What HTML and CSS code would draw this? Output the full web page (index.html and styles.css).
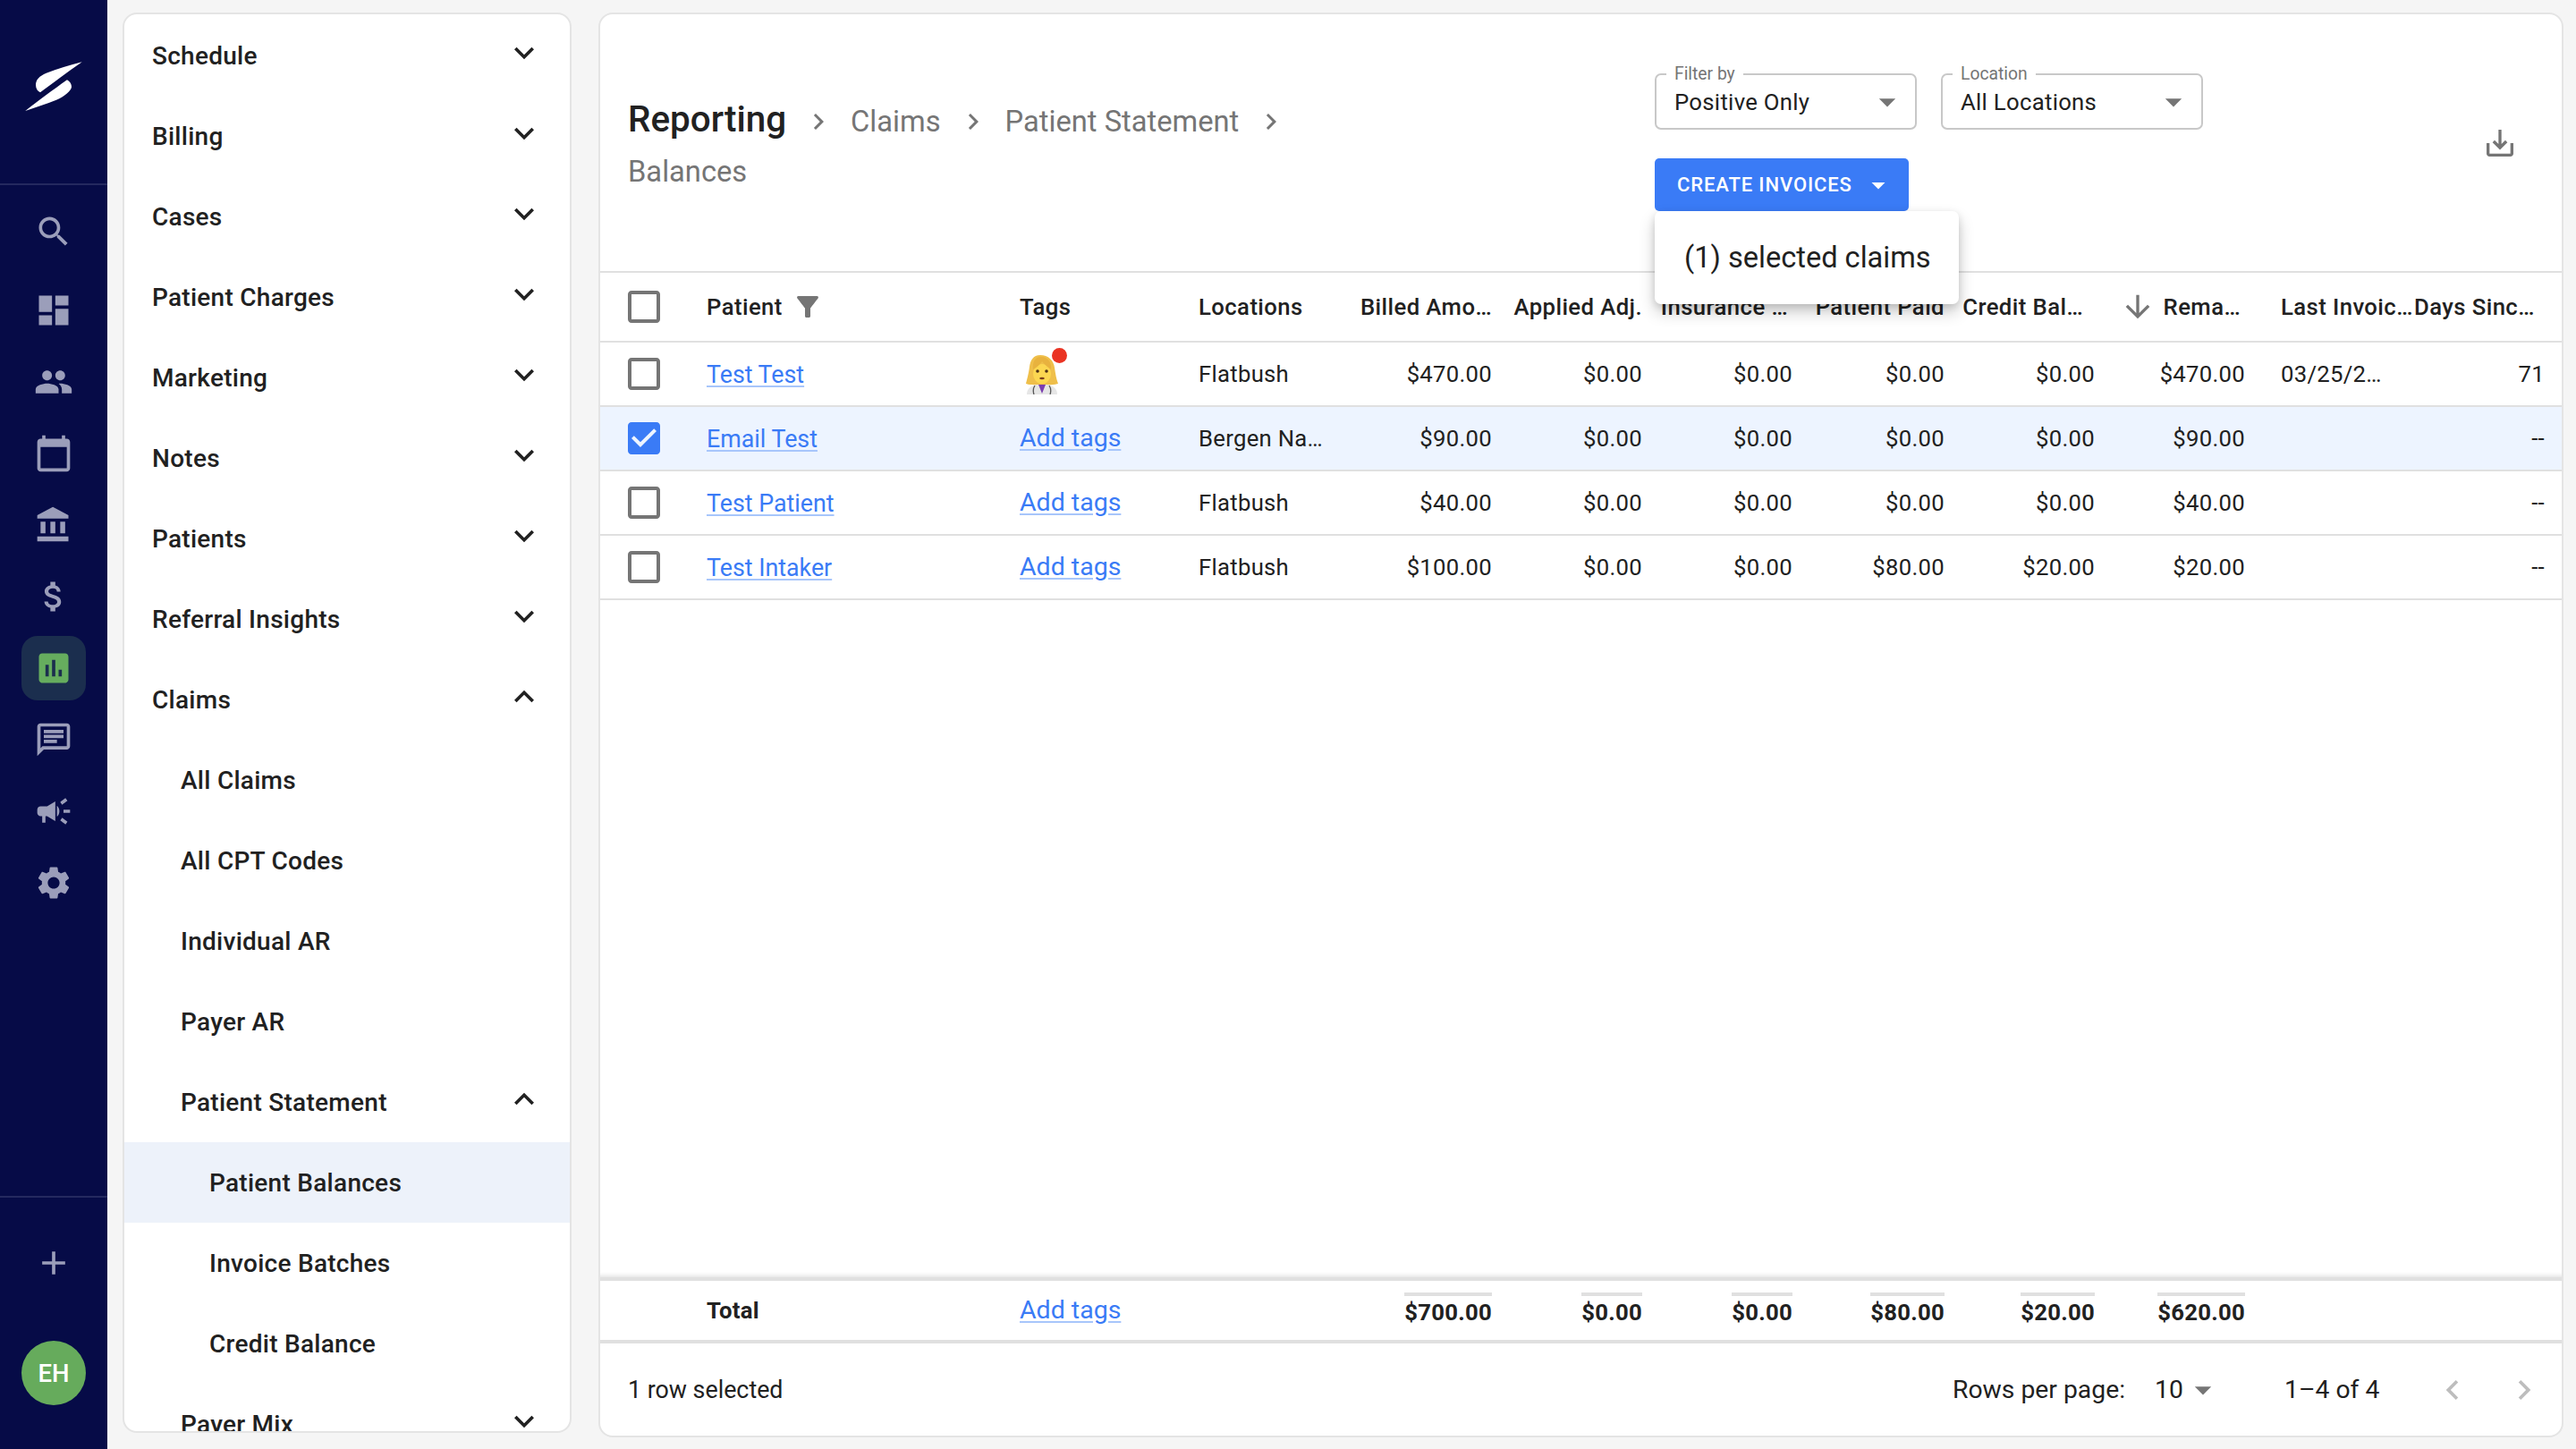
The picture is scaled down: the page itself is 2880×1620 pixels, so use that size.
FILE: index.html
```html
<!DOCTYPE html>
<html lang="en">
<head>
    <meta charset="UTF-8">
    <title>Patient Balances</title>
    <link rel="stylesheet" href="styles.css">
</head>
<body>
    <svg class="defs" aria-hidden="true">
        <symbol id="i-down" viewBox="0 0 24 24"><path d="M16.59 8.59L12 13.17 7.41 8.59 6 10l6 6 6-6z"/></symbol>
        <symbol id="i-up" viewBox="0 0 24 24"><path d="M12 8l-6 6 1.41 1.41L12 10.83l4.59 4.58L18 14z"/></symbol>
        <symbol id="i-next" viewBox="0 0 24 24"><path d="M10 6L8.59 7.41 13.17 12l-4.58 4.59L10 18l6-6z"/></symbol>
        <symbol id="i-prev" viewBox="0 0 24 24"><path d="M15.41 7.41L14 6l-6 6 6 6 1.41-1.41L10.83 12z"/></symbol>
        <symbol id="i-caret" viewBox="0 0 24 24"><path d="M7 10l5 5 5-5z"/></symbol>
        <symbol id="i-box" viewBox="0 0 24 24"><path d="M19 5v14H5V5h14m0-2H5c-1.1 0-2 .9-2 2v14c0 1.1.9 2 2 2h14c1.1 0 2-.9 2-2V5c0-1.1-.9-2-2-2z"/></symbol>
        <symbol id="i-checked" viewBox="0 0 24 24"><path d="M19 3H5c-1.11 0-2 .9-2 2v14c0 1.1.89 2 2 2h14c1.11 0 2-.9 2-2V5c0-1.1-.89-2-2-2zm-9 14l-5-5 1.41-1.41L10 14.17l7.59-7.59L19 8l-9 9z"/></symbol>
    </svg>

    <div class="app">
        <aside class="rail">
            <div class="rail-logo">
                <svg width="64" height="58" viewBox="0 0 64 58"><path d="M63.7 1.3C50 5 36 9 23.7 13.7 16 17 12 21 12 27c0 4 2 7 5 8.3C30 26 48 12 63.7 1.3z"/><path d="M47 21.3c3 1.7 5 4.7 5 7.7 0 4-8 11-17 14.7C24 48 12 52 .3 56 14 45 32 32 47 21.3z"/></svg>
            </div>
            <nav class="rail-icons">
                <a class="rail-item search"><svg viewBox="0 0 24 24"><path d="M15.5 14h-.79l-.28-.27C15.41 12.59 16 11.11 16 9.5 16 5.91 13.09 3 9.5 3S3 5.91 3 9.5 5.91 16 9.5 16c1.61 0 3.09-.59 4.23-1.57l.27.28v.79l5 4.99L20.49 19l-4.99-5zm-6 0C7.01 14 5 11.99 5 9.5S7.01 5 9.5 5 14 7.01 14 9.5 11.99 14 9.5 14z"/></svg></a>
                <a class="rail-item"><svg viewBox="0 0 24 24"><path d="M3 13h8V3H3v10zm0 8h8v-6H3v6zm10 0h8V11h-8v10zm0-18v6h8V3h-8z"/></svg></a>
                <a class="rail-item"><svg viewBox="0 0 24 24"><path d="M16 11c1.66 0 2.99-1.34 2.99-3S17.66 5 16 5c-1.66 0-3 1.34-3 3s1.34 3 3 3zm-8 0c1.66 0 2.99-1.34 2.99-3S9.66 5 8 5C6.34 5 5 6.34 5 8s1.34 3 3 3zm0 2c-2.33 0-7 1.17-7 3.5V19h14v-2.5c0-2.33-4.67-3.5-7-3.5zm8 0c-.29 0-.62.02-.97.05 1.16.84 1.97 1.97 1.97 3.45V19h6v-2.5c0-2.33-4.67-3.5-7-3.5z"/></svg></a>
                <a class="rail-item"><svg viewBox="0 0 24 24"><path d="M20 3h-1V1h-2v2H7V1H5v2H4c-1.1 0-2 .9-2 2v16c0 1.1.9 2 2 2h16c1.1 0 2-.9 2-2V5c0-1.1-.9-2-2-2zm0 18H4V8h16v13z"/></svg></a>
                <a class="rail-item"><svg viewBox="0 0 24 24"><path d="M4 10v7h3v-7H4zm6 0v7h3v-7h-3zM2 22h19v-3H2v3zm14-12v7h3v-7h-3zm-4.5-9L2 6v2h19V6l-9.5-5z"/></svg></a>
                <a class="rail-item"><svg viewBox="0 0 24 24"><path d="M11.8 10.9c-2.27-.59-3-1.2-3-2.15 0-1.09 1.01-1.85 2.7-1.85 1.78 0 2.44.85 2.5 2.1h2.21c-.07-1.72-1.12-3.3-3.21-3.81V3h-3v2.16c-1.94.42-3.5 1.68-3.5 3.61 0 2.31 1.91 3.46 4.7 4.13 2.5.6 3 1.48 3 2.41 0 .69-.49 1.79-2.7 1.79-2.06 0-2.87-.92-2.98-2.1h-2.2c.12 2.19 1.76 3.42 3.68 3.83V21h3v-2.15c1.95-.37 3.5-1.5 3.5-3.55 0-2.84-2.43-3.81-4.7-4.4z"/></svg></a>
                <a class="rail-item active"><svg viewBox="0 0 24 24"><path d="M19 3H5c-1.1 0-2 .9-2 2v14c0 1.1.9 2 2 2h14c1.1 0 2-.9 2-2V5c0-1.1-.9-2-2-2zM9 17H7v-7h2v7zm4 0h-2V7h2v10zm4 0h-2v-4h2v4z"/></svg></a>
                <a class="rail-item"><svg viewBox="0 0 24 24"><path d="M20 2H4c-1.1 0-1.99.9-1.99 2L2 22l4-4h14c1.1 0 2-.9 2-2V4c0-1.1-.9-2-2-2zm0 14H5.17L4 17.17V4h16v12z"/><path d="M6 6h12v2H6zm0 3h12v2H6zm0 3h8v2H6z"/></svg></a>
                <a class="rail-item"><svg viewBox="0 0 24 24"><path d="M18 11v2h4v-2h-4zm-2 6.61c.96.71 2.21 1.65 3.2 2.39.4-.53.8-1.07 1.2-1.6-.99-.74-2.24-1.68-3.2-2.4-.4.54-.8 1.08-1.2 1.61zM20.4 5.6c-.4-.53-.8-1.07-1.2-1.6-.99.74-2.24 1.68-3.2 2.4.4.53.8 1.07 1.2 1.6.96-.72 2.21-1.65 3.2-2.4zM4 9c-1.1 0-2 .9-2 2v2c0 1.1.9 2 2 2h1v4h2v-4h1l5 3V6L8 9H4zm11.5 3c0-1.33-.58-2.53-1.5-3.35v6.69c.92-.81 1.5-2.01 1.5-3.34z"/></svg></a>
                <a class="rail-item"><svg viewBox="0 0 24 24"><path d="M19.14 12.94c.04-.3.06-.61.06-.94 0-.32-.02-.64-.07-.94l2.03-1.58c.18-.14.23-.41.12-.61l-1.92-3.32c-.12-.22-.37-.29-.59-.22l-2.39.96c-.5-.38-1.03-.7-1.62-.94l-.36-2.54c-.04-.24-.24-.41-.48-.41h-3.84c-.24 0-.43.17-.47.41l-.36 2.54c-.59.24-1.13.57-1.62.94l-2.39-.96c-.22-.08-.47 0-.59.22L2.74 8.87c-.12.21-.08.47.12.61l2.03 1.58c-.05.3-.09.63-.09.94s.02.64.07.94l-2.03 1.58c-.18.14-.23.41-.12.61l1.92 3.32c.12.22.37.29.59.22l2.39-.96c.5.38 1.03.7 1.62.94l.36 2.54c.05.24.24.41.48.41h3.84c.24 0 .44-.17.47-.41l.36-2.54c.59-.24 1.13-.56 1.62-.94l2.39.96c.22.08.47 0 .59-.22l1.92-3.32c.12-.22.07-.47-.12-.61l-2.01-1.58zM12 15.6c-1.98 0-3.6-1.62-3.6-3.6s1.62-3.6 3.6-3.6 3.6 1.62 3.6 3.6-1.62 3.6-3.6 3.6z"/></svg></a>
            </nav>
            <div class="rail-bottom">
                <a class="rail-item"><svg viewBox="0 0 24 24"><path d="M19 13h-6v6h-2v-6H5v-2h6V5h2v6h6v2z"/></svg></a>
                <div class="avatar">EH</div>
            </div>
        </aside>

        <nav class="side-menu">
            <div class="menu-row"><span>Schedule</span><svg class="chev"><use href="#i-down"/></svg></div>
            <div class="menu-row"><span>Billing</span><svg class="chev"><use href="#i-down"/></svg></div>
            <div class="menu-row"><span>Cases</span><svg class="chev"><use href="#i-down"/></svg></div>
            <div class="menu-row"><span>Patient Charges</span><svg class="chev"><use href="#i-down"/></svg></div>
            <div class="menu-row"><span>Marketing</span><svg class="chev"><use href="#i-down"/></svg></div>
            <div class="menu-row"><span>Notes</span><svg class="chev"><use href="#i-down"/></svg></div>
            <div class="menu-row"><span>Patients</span><svg class="chev"><use href="#i-down"/></svg></div>
            <div class="menu-row"><span>Referral Insights</span><svg class="chev"><use href="#i-down"/></svg></div>
            <div class="menu-row"><span>Claims</span><svg class="chev"><use href="#i-up"/></svg></div>
            <div class="menu-row sub"><span>All Claims</span></div>
            <div class="menu-row sub"><span>All CPT Codes</span></div>
            <div class="menu-row sub"><span>Individual AR</span></div>
            <div class="menu-row sub"><span>Payer AR</span></div>
            <div class="menu-row sub"><span>Patient Statement</span><svg class="chev"><use href="#i-up"/></svg></div>
            <div class="menu-row sub2 current"><span>Patient Balances</span></div>
            <div class="menu-row sub2"><span>Invoice Batches</span></div>
            <div class="menu-row sub2"><span>Credit Balance</span></div>
            <div class="menu-row sub"><span>Payer Mix</span><svg class="chev"><use href="#i-down"/></svg></div>
        </nav>

        <main class="content">
            <header class="page-head">
                <div class="crumbs">
                    <strong>Reporting</strong><svg class="sep"><use href="#i-next"/></svg><span>Claims</span><svg class="sep"><use href="#i-next"/></svg><span>Patient Statement</span><svg class="sep"><use href="#i-next"/></svg><span class="last">Balances</span>
                </div>
                <div class="controls">
                    <div class="selects">
                        <div class="select">
                            <label>Filter by</label>
                            <span>Positive Only</span>
                            <svg class="caret"><use href="#i-caret"/></svg>
                        </div>
                        <div class="select">
                            <label>Location</label>
                            <span>All Locations</span>
                            <svg class="caret"><use href="#i-caret"/></svg>
                        </div>
                    </div>
                    <div class="invoice-wrap">
                        <button class="invoice-btn">CREATE INVOICES<svg><use href="#i-caret"/></svg></button>
                        <div class="popup">(1) selected claims</div>
                    </div>
                </div>
                <svg class="download" viewBox="0 0 24 24"><path d="M19 12v7H5v-7H3v7c0 1.1.9 2 2 2h14c1.1 0 2-.9 2-2v-7h-2zm-6 .67l2.59-2.58L17 11.5l-5 5-5-5 1.41-1.41L11 12.67V3h2z"/></svg>
            </header>

            <div class="grid-row grid-head">
                <div class="cell-check"><svg class="check"><use href="#i-box"/></svg></div>
                <div class="with-icon">Patient<svg class="filter" viewBox="0 0 24 24"><path d="M4.25 5.61C6.27 8.2 10 13 10 13v6c0 .55.45 1 1 1h2c.55 0 1-.45 1-1v-6s3.72-4.8 5.74-7.39c.51-.66.04-1.61-.79-1.61H5.04c-.83 0-1.3.95-.79 1.61z"/></svg></div>
                <div>Tags</div>
                <div>Locations</div>
                <div class="num">Billed Amo…</div>
                <div class="num">Applied Adj.</div>
                <div class="num cut-a">Insurance …</div>
                <div class="num">Patient Paid</div>
                <div class="num cut-b">Credit Bal…</div>
                <div class="num cut-c"><svg class="sort" viewBox="0 0 24 24"><path d="M20 12l-1.41-1.41L13 16.17V4h-2v12.17l-5.58-5.59L4 12l8 8 8-8z"/></svg>Rema…</div>
                <div class="last-inv">Last Invoic…</div>
                <div>Days Sinc…</div>
            </div>

            <div class="grid-row">
                <div class="cell-check"><svg class="check"><use href="#i-box"/></svg></div>
                <div><a class="link name">Test Test</a></div>
                <div>
                    <span class="tag-emoji">
                        <svg width="36" height="45" viewBox="0 0 36 45">
                            <path d="M16 1C8 1 5 7 4 14 3 22 1 29 0 33c4 2 30 2 36 0-2-5-3-11-4-18C31 7 25 1 16 1z" fill="#efbf4a"/>
                            <path d="M1 45c0-7 5-10 12-11h10c7 1 12 4 12 11z" fill="#e6e6e6"/>
                            <path d="M14 34l4 10 4-10z" fill="#7b3db0"/>
                            <path d="M10 35c-2 3-2 7-1 10M26 35c2 3 2 7 1 10" stroke="#555" stroke-width="1.3" fill="none"/>
                            <ellipse cx="18" cy="22" rx="10" ry="11" fill="#fcd751"/>
                            <path d="M8 17c4-2 8-6 10-9 3 4 7 7 10 9 1-7-3-14-11-14-7 0-10 6-9 14z" fill="#e8b23e"/>
                            <circle cx="13" cy="19" r="1.8" fill="#4d3016"/><circle cx="23" cy="19" r="1.8" fill="#4d3016"/>
                            <ellipse cx="18" cy="27" rx="2.8" ry="1.3" fill="#7a3f1a"/>
                        </svg>
                        <i class="dot"></i>
                    </span>
                </div>
                <div>Flatbush</div>
                <div class="num">$470.00</div><div class="num">$0.00</div><div class="num">$0.00</div><div class="num">$0.00</div><div class="num">$0.00</div><div class="num">$470.00</div>
                <div class="last-inv">03/25/2…</div>
                <div class="num">71</div>
            </div>

            <div class="grid-row selected">
                <div class="cell-check"><svg class="check on"><use href="#i-checked"/></svg></div>
                <div><a class="link name">Email Test</a></div>
                <div><a class="link">Add tags</a></div>
                <div>Bergen Na…</div>
                <div class="num">$90.00</div><div class="num">$0.00</div><div class="num">$0.00</div><div class="num">$0.00</div><div class="num">$0.00</div><div class="num">$90.00</div>
                <div class="last-inv"></div>
                <div class="num">--</div>
            </div>

            <div class="grid-row">
                <div class="cell-check"><svg class="check"><use href="#i-box"/></svg></div>
                <div><a class="link name">Test Patient</a></div>
                <div><a class="link">Add tags</a></div>
                <div>Flatbush</div>
                <div class="num">$40.00</div><div class="num">$0.00</div><div class="num">$0.00</div><div class="num">$0.00</div><div class="num">$0.00</div><div class="num">$40.00</div>
                <div class="last-inv"></div>
                <div class="num">--</div>
            </div>

            <div class="grid-row">
                <div class="cell-check"><svg class="check"><use href="#i-box"/></svg></div>
                <div><a class="link name">Test Intaker</a></div>
                <div><a class="link">Add tags</a></div>
                <div>Flatbush</div>
                <div class="num">$100.00</div><div class="num">$0.00</div><div class="num">$0.00</div><div class="num">$80.00</div><div class="num">$20.00</div><div class="num">$20.00</div>
                <div class="last-inv"></div>
                <div class="num">--</div>
            </div>

            <div class="grid-fill"></div>

            <div class="grid-row grid-total">
                <div></div>
                <div>Total</div>
                <div><a class="link">Add tags</a></div>
                <div></div>
                <div class="num"><span class="sum">$700.00</span></div>
                <div class="num"><span class="sum">$0.00</span></div>
                <div class="num"><span class="sum">$0.00</span></div>
                <div class="num"><span class="sum">$80.00</span></div>
                <div class="num"><span class="sum">$20.00</span></div>
                <div class="num"><span class="sum">$620.00</span></div>
                <div></div>
                <div></div>
            </div>

            <footer class="pager">
                <span class="pager-count">1 row selected</span>
                <span class="pager-label">Rows per page:</span>
                <span class="pager-size">10<svg><use href="#i-caret"/></svg></span>
                <span class="pager-range">1–4 of 4</span>
                <svg class="pager-arrow"><use href="#i-prev"/></svg>
                <svg class="pager-arrow"><use href="#i-next"/></svg>
            </footer>
        </main>
    </div>
</body>
</html>
```

FILE: styles.css
```css
* {
    box-sizing: border-box;
}
body {
    margin: 0;
    background-color: #f5f5f5;
    font-family: Roboto, "Liberation Sans", sans-serif;
    font-size: 25.7px;
    color: #212121;
}
.defs {
    display: none;
}
.app {
    display: flex;
    height: 1620px;
    overflow: hidden;
}

/* left icon rail */
.rail {
    width: 120px;
    flex-shrink: 0;
    display: flex;
    flex-direction: column;
    background-color: #060b47;
}
.rail-logo {
    height: 207px;
    padding: 68px 0 0 28px;
    border-bottom: 2px solid #24295f;
}
.rail-logo svg {
    display: block;
    fill: #fff;
}
.rail-icons {
    flex: 1;
    display: flex;
    flex-direction: column;
    gap: 8px;
    padding-top: 16px;
}
.rail-item {
    display: flex;
    align-items: center;
    justify-content: center;
    width: 72px;
    height: 72px;
    margin: 0 24px;
    border-radius: 18px;
}
.rail-item.search {
    margin-bottom: 8px;
}
.rail-item svg {
    width: 44px;
    height: 44px;
    fill: #9b9eba;
}
.rail-item.active {
    background-color: #1b2e4e;
}
.rail-item.active svg {
    fill: #66ad5e;
}
.rail-bottom {
    height: 283px;
    padding-top: 37px;
    border-top: 2px solid #24295f;
}
.avatar {
    display: flex;
    align-items: center;
    justify-content: center;
    width: 72px;
    height: 72px;
    margin: 51px 24px 0;
    border-radius: 50%;
    background-color: #66ab5c;
    color: #fff;
    font-size: 27.5px;
    font-weight: 500;
}

/* menu panel */
.side-menu {
    width: 502px;
    height: 1588px;
    flex-shrink: 0;
    margin: 14px 0 0 17px;
    padding-top: 1px;
    background: #fff;
    border: 2px solid #e4e4e4;
    border-radius: 16px;
    overflow: hidden;
}
.menu-row {
    display: flex;
    align-items: center;
    justify-content: space-between;
    height: 90px;
    flex-shrink: 0;
    padding: 0 29px 0 31px;
    font-size: 28px;
    font-weight: 500;
    letter-spacing: 0.27px;
}
.menu-row.sub {
    padding-left: 63px;
}
.menu-row.sub2 {
    padding-left: 95px;
}
.menu-row.current {
    background-color: #edf2fa;
}
.chev {
    width: 44px;
    height: 44px;
    margin-top: -6px;
    fill: #212121;
}

/* main panel */
.content {
    width: 2197px;
    height: 1593px;
    flex-shrink: 0;
    margin: 14px 0 0 30px;
    display: flex;
    flex-direction: column;
    background: #fff;
    border: 2px solid #e4e4e4;
    border-radius: 16px;
    overflow: hidden;
}
.page-head {
    display: flex;
    height: 289px;
    flex-shrink: 0;
    padding-left: 31px;
    border-bottom: 2px solid #e0e0e0;
}
.crumbs {
    width: 770px;
    margin: 90px 378px 0 0;
    line-height: 56px;
    font-size: 32.7px;
    color: #757575;
}
.crumbs strong {
    font-size: 40.4px;
    font-weight: 500;
    color: #212121;
}
.sep {
    width: 36px;
    height: 36px;
    margin: 0 18px;
    vertical-align: -7px;
    fill: #757575;
}
.controls {
    padding-top: 66px;
}
.selects {
    display: flex;
    gap: 27px;
}
.select {
    position: relative;
    display: flex;
    align-items: center;
    justify-content: space-between;
    width: 293px;
    height: 63px;
    padding: 0 9px 0 20px;
    border: 2px solid #c8c8c8;
    border-radius: 7px;
    letter-spacing: 0.3px;
}
.select label {
    position: absolute;
    top: -12px;
    left: 11px;
    padding: 0 9px;
    background: #fff;
    font-size: 19.3px;
    line-height: 22px;
    letter-spacing: 0;
    color: #757575;
}
.caret {
    width: 44px;
    height: 44px;
    fill: #757575;
}
.invoice-wrap {
    position: relative;
    margin-top: 32px;
}
.invoice-btn {
    display: flex;
    align-items: center;
    width: 284px;
    height: 59px;
    padding: 0 0 0 25px;
    border: none;
    border-radius: 5px;
    background-color: #3a7bf6;
    color: #fff;
    font-family: inherit;
    font-size: 22px;
    font-weight: 500;
    letter-spacing: 0.88px;
}
.invoice-btn svg {
    width: 36px;
    height: 36px;
    margin-left: 11px;
    fill: #fff;
}
.popup {
    position: absolute;
    top: 59px;
    left: 0;
    z-index: 5;
    width: 340px;
    height: 104px;
    padding-left: 33px;
    line-height: 104px;
    font-size: 32.6px;
    background: #fff;
    border-radius: 7px;
    box-shadow: 0 9px 18px rgba(0, 0, 0, 0.2), 0 3px 8px rgba(0, 0, 0, 0.12);
}
.download {
    width: 40px;
    height: 40px;
    margin: 124px 0 0 312px;
    fill: #757575;
}

/* table */
.grid-row {
    display: grid;
    grid-template-columns: 119px 350px 200px 150px 178px 168px 168px 170px 168px 168px 189px 146px;
    align-items: center;
    height: 72px;
    flex-shrink: 0;
    padding-right: 19px;
    border-bottom: 2px solid #e0e0e0;
    white-space: nowrap;
    letter-spacing: 0.28px;
}
.grid-row.selected {
    background-color: #edf4ff;
}
.grid-head {
    height: 78px;
    font-weight: 500;
    letter-spacing: 0.42px;
}
.cell-check {
    padding-left: 25px;
    height: 48px;
}
.check {
    display: block;
    width: 48px;
    height: 48px;
    fill: #757575;
}
.check.on {
    fill: #3a7bf6;
}
.with-icon {
    display: flex;
    align-items: center;
}
.filter {
    width: 36px;
    height: 36px;
    margin-left: 10px;
    fill: #757575;
}
.sort {
    width: 40px;
    height: 40px;
    margin-right: 9px;
    fill: #757575;
}
.num {
    display: flex;
    justify-content: flex-end;
    align-items: center;
}
.cut-a {
    padding-right: 5px;
}
.cut-b {
    padding-right: 13px;
}
.cut-c {
    padding-right: 5px;
}
.last-inv {
    padding-left: 40px;
}
.link {
    display: inline-block;
    margin-bottom: 2px;
    font-size: 28.5px;
    letter-spacing: 0;
    color: #3a7bf6;
    text-decoration: underline;
    text-decoration-color: #a8c6fb;
    text-underline-offset: 3px;
}
.link.name {
    margin: 2px 0 0;
    font-size: 26.8px;
}
.tag-emoji {
    position: relative;
    display: block;
    width: 36px;
    height: 45px;
    margin-left: 7px;
}
.tag-emoji svg {
    display: block;
}
.dot {
    position: absolute;
    top: -7px;
    right: -10px;
    width: 17px;
    height: 17px;
    border-radius: 50%;
    background-color: #ea3323;
}
.grid-fill {
    flex: 1;
    box-shadow: inset 0 -6px 6px -6px rgba(0, 0, 0, 0.2);
}
.grid-total {
    height: 74px;
    border-top: 4px solid #e0e0e0;
    border-bottom-width: 4px;
    font-weight: 700;
}
.grid-total .link {
    font-weight: 400;
}
.sum {
    margin-top: -4px;
    padding-top: 3px;
    line-height: 30px;
    border-top: 4px solid #e0e0e0;
}

/* footer */
.pager {
    display: flex;
    align-items: center;
    flex: 0 0 103px;
    padding-left: 31px;
    font-size: 28.3px;
}
.pager-count {
    width: 1481px;
    font-size: 26.8px;
}
.pager-label {
    width: 226px;
}
.pager-size {
    display: flex;
    align-items: center;
    width: 145px;
}
.pager-size svg {
    width: 44px;
    height: 44px;
    fill: #757575;
}
.pager-range {
    width: 166px;
}
.pager-arrow {
    width: 44px;
    height: 44px;
    fill: #bdbdbd;
}
.pager-arrow + .pager-arrow {
    margin-left: 36px;
}
```
